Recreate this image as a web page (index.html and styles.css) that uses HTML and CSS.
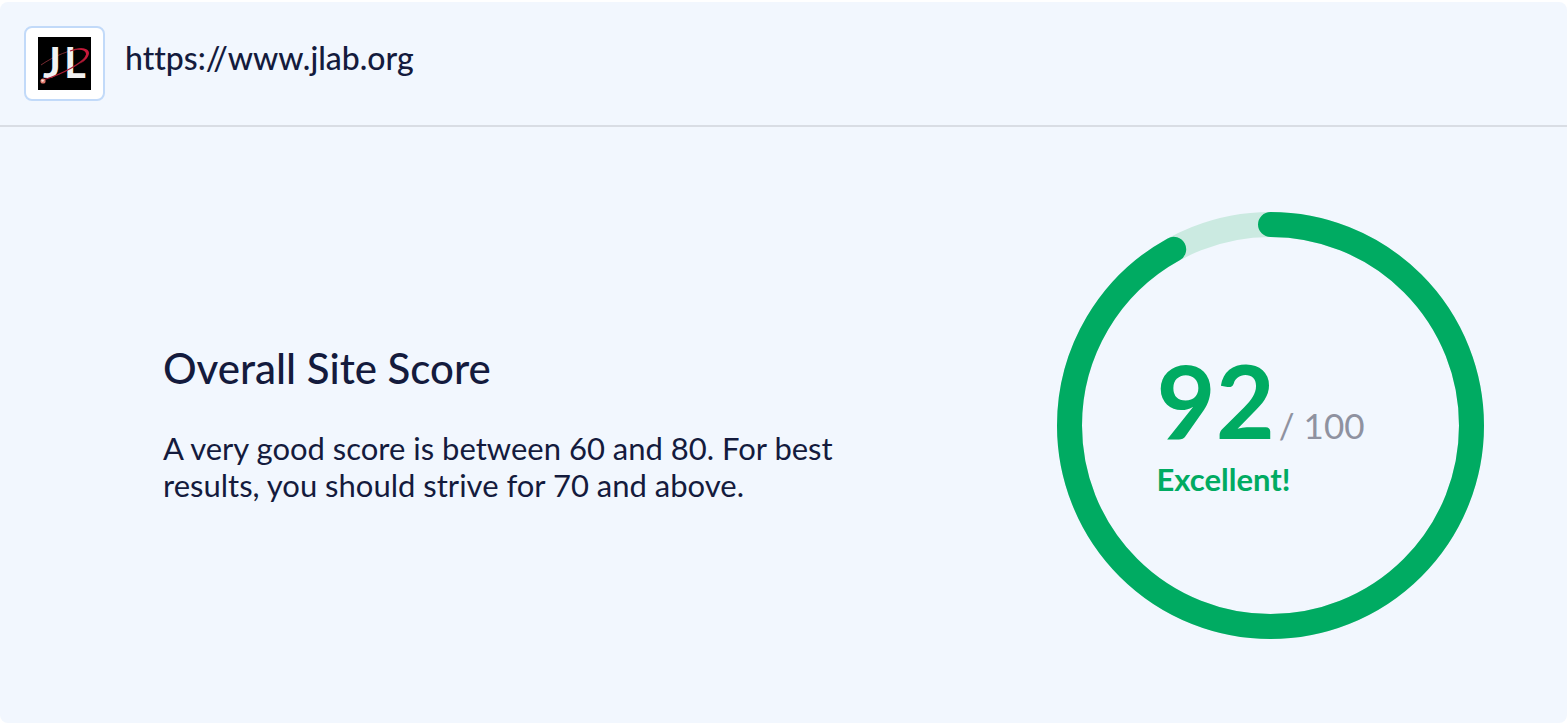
FILE: index.html
```html
<!DOCTYPE html>
<html lang="en">
<head>
  <meta charset="UTF-8" />
  <meta name="viewport" content="width=device-width, initial-scale=1.0"/>
  <title>Overall Site Score</title>
  <link rel="stylesheet" href="styles.css">
</head>
<body>
  <div class="card">
    <header class="site">
      <div class="site-icon">
        <svg viewBox="0 0 53 53" role="img" aria-label="JL">
          <rect width="53" height="53" fill="#000"/>
          <path d="M3 28 C16 19 33 12 44 12" fill="none" stroke="#762b31" stroke-width="1"/>
          <text class="logo-text" x="5" y="41">J</text>
          <text class="logo-text" x="26" y="41">L</text>
          <path d="M5 43 C22 38 49 25 49 16 C49 11 40 11 32 14" fill="none" stroke="#ad1c36" stroke-width="1.3"/>
          <path d="M39 12 C55 9 54 20 42 27 C50 19 51 13 39 12" fill="#c8193a"/>
          <circle cx="5" cy="44" r="2.6" fill="#e0786c"/>
          <circle cx="4.6" cy="43.6" r="1.2" fill="#ffe2d8"/>
        </svg>
      </div>
      <div class="site-url">https://www.jlab.org</div>
    </header>

    <main class="score">
      <div class="score-text">
        <h1>Overall Site Score</h1>
        <p>A very good score is between 60 and 80. For best results, you should strive for 70 and above.</p>
      </div>
      <div class="gauge">
        <svg class="gauge-ring" viewBox="0 0 427 427" aria-hidden="true">
          <circle class="ring-track" cx="213.5" cy="213.5" r="201"/>
          <circle class="ring-value" cx="213.5" cy="213.5" r="201" pathLength="100" stroke-dasharray="92 100" transform="rotate(-90 213.5 213.5)"/>
        </svg>
        <div class="gauge-label">
          <div class="gauge-number"><strong>92</strong><span>/ 100</span></div>
          <div class="gauge-grade">Excellent!</div>
        </div>
      </div>
    </main>
  </div>
</body>
</html>
```
FILE: styles.css
```css
:root {
  --navy: #141b3d;
  --green: #00ab62;
  --track: #cbeae1;
  --grey: #8f92a0;
  --panel: #f2f7fe;
}
* {
  box-sizing: border-box;
}
body {
  margin: 0;
  background: #fff;
  color: var(--navy);
  font-family: Lato, "Open Sans", sans-serif;
  font-variant-ligatures: none;
}
.card {
  margin-top: 2px;
  background: var(--panel);
  border-radius: 8px;
}
.site {
  display: flex;
  align-items: flex-start;
  gap: 20px;
  padding: 24px;
  border-bottom: 2px solid #d9dde4;
}
.site-icon {
  display: flex;
  padding: 9px 12px;
  background: #fff;
  border: 2px solid #c2daf9;
  border-radius: 8px;
}
.site-icon svg {
  width: 53px;
  height: 53px;
}
.logo-text {
  font-size: 42px;
  font-weight: 700;
  fill: #f1f1f1;
}
.site-url {
  font-size: 32px;
  font-weight: 500;
  line-height: 64px;
}
.score {
  display: flex;
  align-items: center;
  justify-content: space-between;
  gap: 80px;
  padding: 85px 83px 84px 163px;
}
.score-text {
  flex: 0 1 700px;
}
h1 {
  margin: 0 0 42px;
  font-size: 42px;
  font-weight: 500;
  line-height: 40px;
}
p {
  margin: 0;
  font-size: 31px;
  line-height: 37px;
}
.gauge {
  display: grid;
  flex: none;
  place-items: center;
}
.gauge-ring,
.gauge-label {
  grid-area: 1 / 1;
}
.gauge-ring {
  width: 427px;
}
.gauge-ring circle {
  fill: none;
  stroke-width: 25px;
}
.gauge-ring .ring-track {
  stroke: var(--track);
}
.gauge-ring .ring-value {
  stroke: var(--green);
  stroke-linecap: round;
}
.gauge-label {
  padding: 0 20px 16px 0;
  color: var(--green);
}
.gauge-number {
  display: flex;
  align-items: baseline;
  gap: 4px;
  line-height: 122px;
  white-space: nowrap;
}
.gauge-number strong {
  font-size: 102px;
  font-weight: 700;
}
.gauge-number span {
  color: var(--grey);
  font-size: 35px;
  line-height: 36px;
}
.gauge-grade {
  font-size: 31px;
  font-weight: 700;
  line-height: 36px;
}
```
